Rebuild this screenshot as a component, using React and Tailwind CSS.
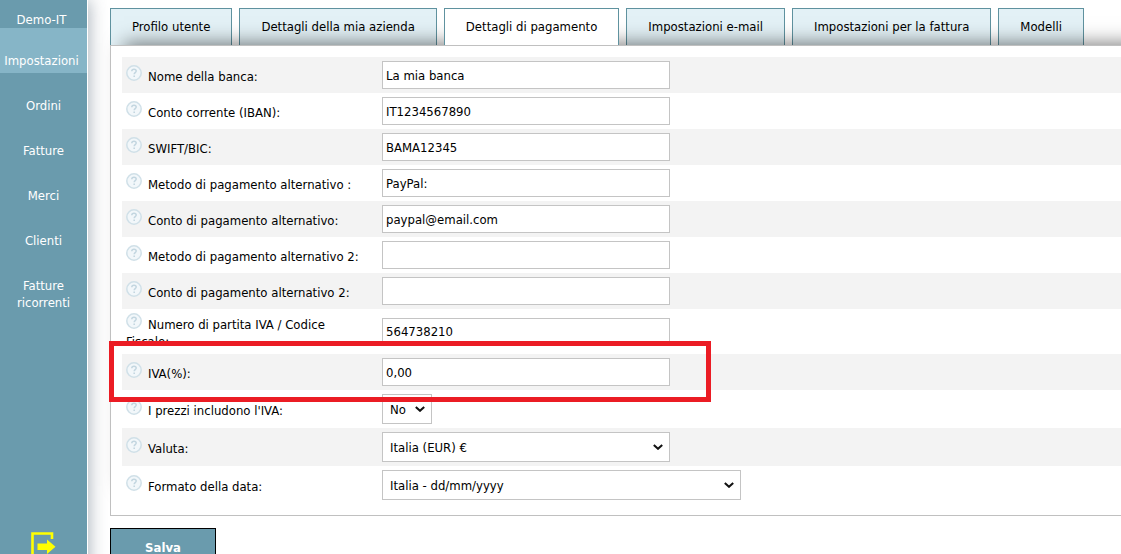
import React, { useState } from 'react';

const menu = ["Impostazioni", "Ordini", "Fatture", "Merci", "Clienti", "Fatture ricorrenti"];

const tabs = [
  "Profilo utente",
  "Dettagli della mia azienda",
  "Dettagli di pagamento",
  "Impostazioni e-mail",
  "Impostazioni per la fattura",
  "Modelli",
];

const fields = [
  { id: "bank", label: "Nome della banca:", value: "La mia banca" },
  { id: "iban", label: "Conto corrente (IBAN):", value: "IT1234567890" },
  { id: "swift", label: "SWIFT/BIC:", value: "BAMA12345" },
  { id: "altMethod", label: "Metodo di pagamento alternativo :", value: "PayPal:" },
  { id: "altAccount", label: "Conto di pagamento alternativo:", value: "paypal@email.com" },
  { id: "altMethod2", label: "Metodo di pagamento alternativo 2:", value: "" },
  { id: "altAccount2", label: "Conto di pagamento alternativo 2:", value: "" },
  { id: "vatNumber", label: "Numero di partita IVA / Codice Fiscale:", value: "564738210" },
  { id: "vat", label: "IVA(%):", value: "0,00", highlight: true },
  { id: "vatIncluded", label: "I prezzi includono l'IVA:", value: "No", options: ["No", "Sì"], width: "w-[50px]" },
  { id: "currency", label: "Valuta:", value: "Italia (EUR) €", options: ["Italia (EUR) €"], width: "w-72" },
  { id: "dateFormat", label: "Formato della data:", value: "Italia - dd/mm/yyyy", options: ["Italia - dd/mm/yyyy"], width: "w-[359px]" },
];

function HelpIcon() {
  return (
    <svg viewBox="0 0 16 16" className="inline-block w-4 h-4 mr-1.5 align-baseline" fill="none" aria-hidden="true">
      <circle cx="8" cy="8" r="7.2" fill="#f2f7fa" stroke="#d0e0e8" strokeWidth="1.5" />
      <path d="M5.8 6.3C5.8 4.9 6.7 4.2 8 4.2s2.2.7 2.2 1.9c0 1.5-2 1.6-2 3.2" stroke="#c3d6e0" strokeWidth="1.5" />
      <path d="M7.4 10.6h1.6v1.5H7.4z" fill="#c3d6e0" />
    </svg>
  );
}

function SelectBox({ field, value, onChange }) {
  return (
    <div className={`relative ${field.width}`}>
      <select
        id={field.id}
        value={value}
        onChange={(e) => onChange(e.target.value)}
        className="block w-full h-[30px] pl-[7px] pt-px appearance-none bg-white border border-[#c4c4c4] text-black"
      >
        {field.options.map((option) => (
          <option key={option}>{option}</option>
        ))}
      </select>
      <svg viewBox="0 0 10 6" className="absolute right-[7px] top-3 w-[10px] h-[6px] pointer-events-none" fill="none">
        <path d="M0.8 0.9L5 4.8L9.2 0.9" stroke="#111" strokeWidth="2" />
      </svg>
    </div>
  );
}

function Row({ field }) {
  const [value, setValue] = useState(field.value);

  return (
    <div className="relative flex items-center py-1 odd:bg-[#f3f3f3]">
      <label htmlFor={field.id} className="w-[260px] shrink-0 pl-1 pr-3 leading-[17px]">
        <HelpIcon />
        {field.label}
      </label>
      {field.options ? (
        <SelectBox field={field} value={value} onChange={setValue} />
      ) : (
        <input
          id={field.id}
          type="text"
          value={value}
          onChange={(e) => setValue(e.target.value)}
          className="w-72 h-7 px-[3px] bg-white border border-[#c4c4c4] text-black"
        />
      )}
      {field.highlight && (
        <div className="absolute -left-[13px] -top-[13px] z-10 w-[602px] h-[61px] border-[5px] border-[#eb1c24] pointer-events-none" />
      )}
    </div>
  );
}

function App() {
  const [activeTab, setActiveTab] = useState("Dettagli di pagamento");

  return (
    <div className="min-h-screen flex overflow-hidden bg-white text-black text-[13px] font-['DejaVu_Sans_Condensed','Noto_Sans',sans-serif]">
      {/* Sidebar */}
      <aside className="w-[87px] shrink-0 flex flex-col bg-[#6a9bad] text-white text-center leading-[17px] shadow-[1px_0_0_#fff,2px_0_16px_rgba(60,80,100,0.45)]">
        <a href="#account" className="h-7 pr-1 pt-3 leading-4">Demo-IT</a>
        <nav className="flex flex-col">
          {menu.map((item, i) => (
            <a key={item} href="#menu" className={`pt-6 pb-1 pr-1 ${i === 0 ? "bg-[#86b5c7]" : "pl-1"}`}>
              {item}
            </a>
          ))}
        </nav>
        <a href="#logout" aria-label="Esci" className="mt-auto mb-6 mx-auto">
          <svg viewBox="0 0 26 28" className="w-[26px] h-7" fill="none">
            <path d="M21 7V1.5H1.5v25H21V22" stroke="#ff0" strokeWidth="2.6" />
            <path d="M6.5 11.5H16V7.5l8.5 7.2-8.5 7.2v-4H6.5z" fill="#ff0" />
          </svg>
        </a>
      </aside>

      {/* Content */}
      <main className="flex-1 min-w-0 pl-[23px] pt-2 pb-4">
        <div className="flex gap-[7px]">
          {tabs.map((tab) => (
            <button
              key={tab}
              type="button"
              onClick={() => setActiveTab(tab)}
              className={`h-[37px] px-[21px] whitespace-nowrap border border-b-0 border-[#5f929f] ${
                tab === activeTab ? "relative z-10 bg-white" : "bg-[#e3f1f6]"
              }`}
            >
              {tab}
            </button>
          ))}
        </div>

        <form onSubmit={(e) => e.preventDefault()}>
          <div className="relative -mr-12 p-[11px] bg-white border border-[#c0c0c0] shadow-[0_-16px_18px_-14px_rgba(0,0,0,0.5)]">
            {fields.map((field) => (
              <Row key={field.id} field={field} />
            ))}
          </div>

          <button type="submit" className="mt-3 w-[106px] h-10 bg-[#6a9bad] border border-black text-white font-bold">
            Salva
          </button>
        </form>
      </main>
    </div>
  );
}

export default App;
